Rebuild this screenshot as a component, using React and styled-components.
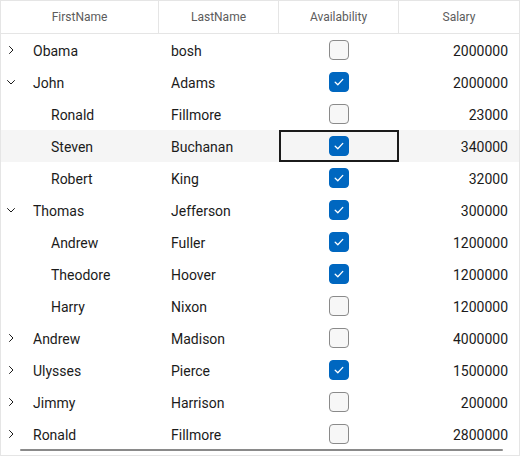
import React from "react";
import styled, { createGlobalStyle } from "styled-components";

const GlobalStyle = createGlobalStyle`
  html, body {
    margin: 0;
    padding: 0;
    background: #ffffff;
  }
  body {
    font-family: "Segoe UI", Roboto, "Noto Sans", sans-serif;
    color: #1b1b1b;
  }
`;

const rows = [
  { first: "Obama", last: "bosh", available: false, salary: 2000000, kind: "collapsed" },
  { first: "John", last: "Adams", available: true, salary: 2000000, kind: "expanded" },
  { first: "Ronald", last: "Fillmore", available: false, salary: 23000, kind: "child" },
  { first: "Steven", last: "Buchanan", available: true, salary: 340000, kind: "child", selected: true },
  { first: "Robert", last: "King", available: true, salary: 32000, kind: "child" },
  { first: "Thomas", last: "Jefferson", available: true, salary: 300000, kind: "expanded" },
  { first: "Andrew", last: "Fuller", available: true, salary: 1200000, kind: "child" },
  { first: "Theodore", last: "Hoover", available: true, salary: 1200000, kind: "child" },
  { first: "Harry", last: "Nixon", available: false, salary: 1200000, kind: "child" },
  { first: "Andrew", last: "Madison", available: false, salary: 4000000, kind: "collapsed" },
  { first: "Ulysses", last: "Pierce", available: true, salary: 1500000, kind: "collapsed" },
  { first: "Jimmy", last: "Harrison", available: false, salary: 200000, kind: "collapsed" },
  { first: "Ronald", last: "Fillmore", available: false, salary: 2800000, kind: "collapsed" },
];

export default function App() {
  return (
    <>
      <GlobalStyle />
      <Grid>
        <HeaderRow>
          <HeaderCell>FirstName</HeaderCell>
          <HeaderCell $divider>LastName</HeaderCell>
          <HeaderCell $divider>Availability</HeaderCell>
          <HeaderCell $divider>Salary</HeaderCell>
        </HeaderRow>
        {rows.map((row, i) => (
          <Row key={i} $selected={row.selected}>
            <NameCell $child={row.kind === "child"}>
              {row.kind !== "child" && (
                <Expander>
                  <Chevron open={row.kind === "expanded"} />
                </Expander>
              )}
              <CellText>{row.first}</CellText>
            </NameCell>
            <TextCell>
              <CellText>{row.last}</CellText>
            </TextCell>
            <CheckCell $focused={row.selected}>
              <CheckBox $checked={row.available}>
                {row.available && (
                  <svg width="12" height="12" viewBox="0 0 12 12">
                    <path
                      d="M2.2 6.3 L4.8 8.8 L9.8 3.4"
                      fill="none"
                      stroke="#ffffff"
                      strokeWidth="1.3"
                      strokeLinecap="round"
                      strokeLinejoin="round"
                    />
                  </svg>
                )}
              </CheckBox>
            </CheckCell>
            <NumberCell>
              <CellText>{row.salary}</CellText>
            </NumberCell>
          </Row>
        ))}
        <ScrollThumb />
      </Grid>
    </>
  );
}

function Chevron({ open }) {
  return (
    <svg width="10" height="10" viewBox="0 0 10 10">
      <path
        d={open ? "M1.5 3.5 L5 7 L8.5 3.5" : "M3.5 1.5 L7 5 L3.5 8.5"}
        fill="none"
        stroke="#1b1b1b"
        strokeWidth="1"
        strokeLinecap="round"
        strokeLinejoin="round"
      />
    </svg>
  );
}

const Grid = styled.div`
  position: relative;
  width: 520px;
  height: 456px;
  box-sizing: border-box;
  border: 1px solid #e5e5e5;
  overflow: hidden;
  background: #ffffff;
`;

const HeaderRow = styled.div`
  display: grid;
  grid-template-columns: 157px 120px 120px 1fr;
  height: 32px;
  border-bottom: 1px solid #e5e5e5;
`;

const HeaderCell = styled.div`
  display: flex;
  align-items: center;
  justify-content: center;
  font-size: 12px;
  color: #5c5c5c;
  border-left: ${(p) => (p.$divider ? "1px solid #e5e5e5" : "none")};
`;

const Row = styled.div`
  display: grid;
  grid-template-columns: 158px 120px 120px 1fr;
  height: 32px;
  font-size: 14px;
  background: ${(p) => (p.$selected ? "#f5f5f5" : "transparent")};
`;

const CellText = styled.span`
  padding-top: 2px;
`;

const NameCell = styled.div`
  display: flex;
  align-items: center;
  padding-left: ${(p) => (p.$child ? "50px" : "0")};
`;

const Expander = styled.span`
  display: flex;
  align-items: center;
  justify-content: center;
  width: 20px;
  height: 20px;
  margin-right: 12px;
`;

const TextCell = styled.div`
  display: flex;
  align-items: center;
  padding-left: 12px;
`;

const CheckCell = styled.div`
  display: flex;
  align-items: center;
  justify-content: center;
  box-sizing: border-box;
  border: 2px solid ${(p) => (p.$focused ? "#1b1b1b" : "transparent")};
`;

const CheckBox = styled.span`
  display: flex;
  align-items: center;
  justify-content: center;
  width: 20px;
  height: 20px;
  box-sizing: border-box;
  border-radius: 4px;
  background: ${(p) => (p.$checked ? "#0067c0" : "#f7f7f7")};
  border: 1px solid ${(p) => (p.$checked ? "#0067c0" : "#8a8a8a")};
`;

const NumberCell = styled.div`
  display: flex;
  align-items: center;
  justify-content: flex-end;
  padding-right: 11px;
`;

const ScrollThumb = styled.div`
  position: absolute;
  left: 19px;
  right: 16px;
  bottom: 4px;
  height: 2px;
  border-radius: 1px;
  background: #8a8a8a;
`;
